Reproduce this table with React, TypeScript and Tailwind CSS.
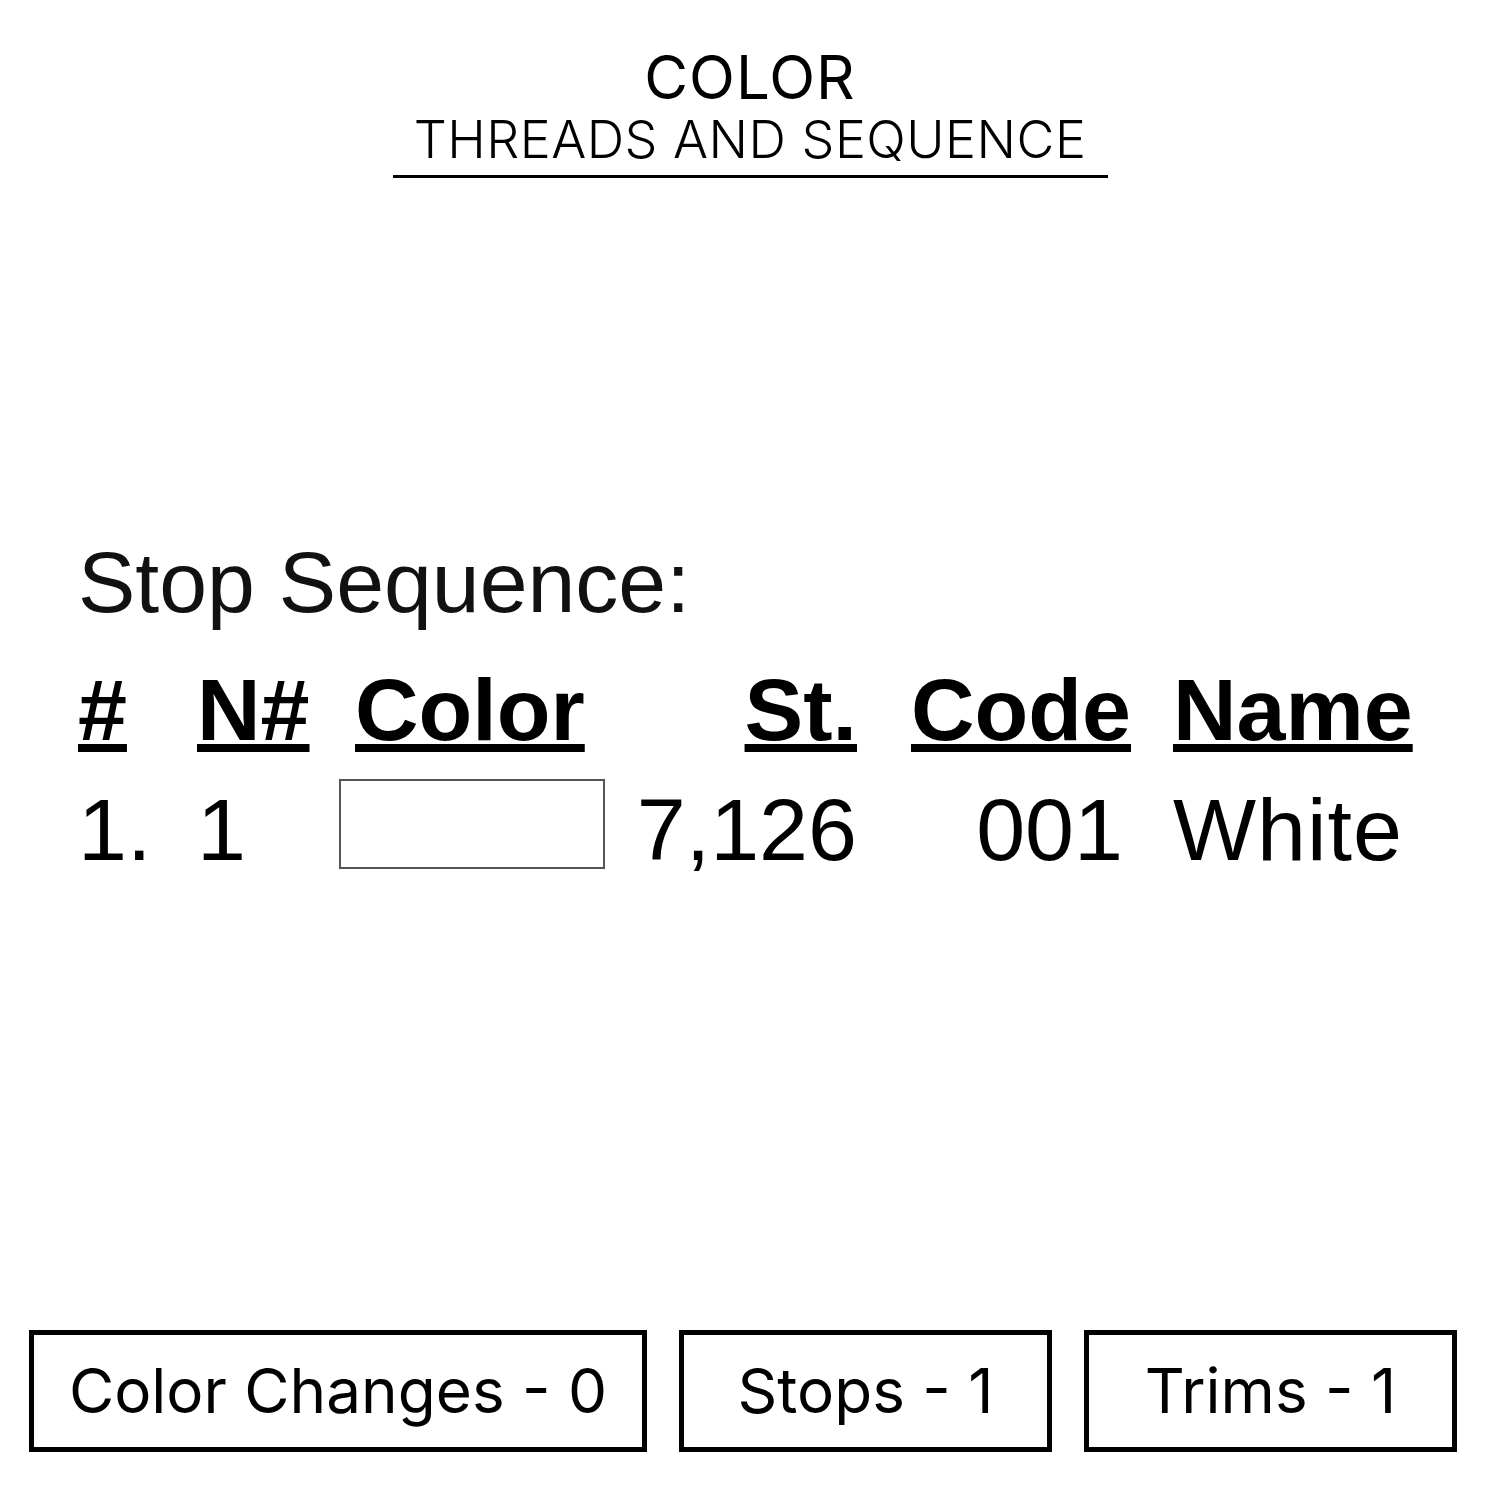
import React from 'react';

const headCols = [
  { label: '#', cls: 'w-[119px]' },
  { label: 'N#', cls: 'w-[142px]' },
  { label: 'Color', cls: 'w-[281px] pl-[16px]' },
  { label: 'St.', cls: 'w-[237px] text-right' },
  { label: 'Code', cls: 'w-[274px] text-right' },
  { label: 'Name', cls: 'pl-[42px]' },
];

const counters = [
  { label: 'Color Changes - 0', cls: 'w-[618px]' },
  { label: 'Stops - 1', cls: 'w-[373px]' },
  { label: 'Trims - 1', cls: 'w-[373px]' },
];

const App: React.FC = () => {
  return (
    <div className="w-[1500px] h-[1500px] bg-white text-black flex flex-col">
      {/* Title */}
      <header className="flex flex-col items-center pt-[47px] font-['Inter',sans-serif]">
        <div className="text-[60px] font-normal leading-none tracking-[1px]">COLOR</div>
        <div className="mt-[7px] w-[715px] text-center text-[52px] font-light leading-none tracking-[0.5px] pb-[9px] border-b-[3px] border-black">
          THREADS AND SEQUENCE
        </div>
      </header>

      {/* Stop sequence table */}
      <section className="mt-[361px] pl-[78px] font-['Liberation_Sans',Arial,sans-serif]">
        <div className="text-[86px] leading-none text-[#111]">Stop Sequence:</div>

        <div className="mt-[41px] flex text-[88px] font-bold leading-none">
          {headCols.map((c) => (
            <div key={c.label} className={c.cls}>
              <span className="underline decoration-8 underline-offset-4">{c.label}</span>
            </div>
          ))}
        </div>

        <div className="mt-[25px] flex items-start text-[88px] leading-none">
          <div className="w-[119px] pt-[7px]">1.</div>
          <div className="w-[142px] pt-[7px]">1</div>
          <div className="w-[281px]">
            <div className="w-[266px] h-[90px] border-2 border-[#555]" />
          </div>
          <div className="w-[237px] pt-[7px] text-right">7,126</div>
          <div className="w-[274px] pt-[7px] pr-[8px] text-right">001</div>
          <div className="pl-[42px] pt-[7px] tracking-[1px]">White</div>
        </div>
      </section>

      {/* Counters */}
      <footer className="mt-auto mb-[48px] pl-[29px] flex gap-[32px] font-['Inter',sans-serif]">
        {counters.map((c) => (
          <div
            key={c.label}
            className={`${c.cls} h-[122px] border-[5px] border-black flex items-center justify-center text-[62px] leading-none`}
          >
            {c.label}
          </div>
        ))}
      </footer>
    </div>
  );
};

export default App;
